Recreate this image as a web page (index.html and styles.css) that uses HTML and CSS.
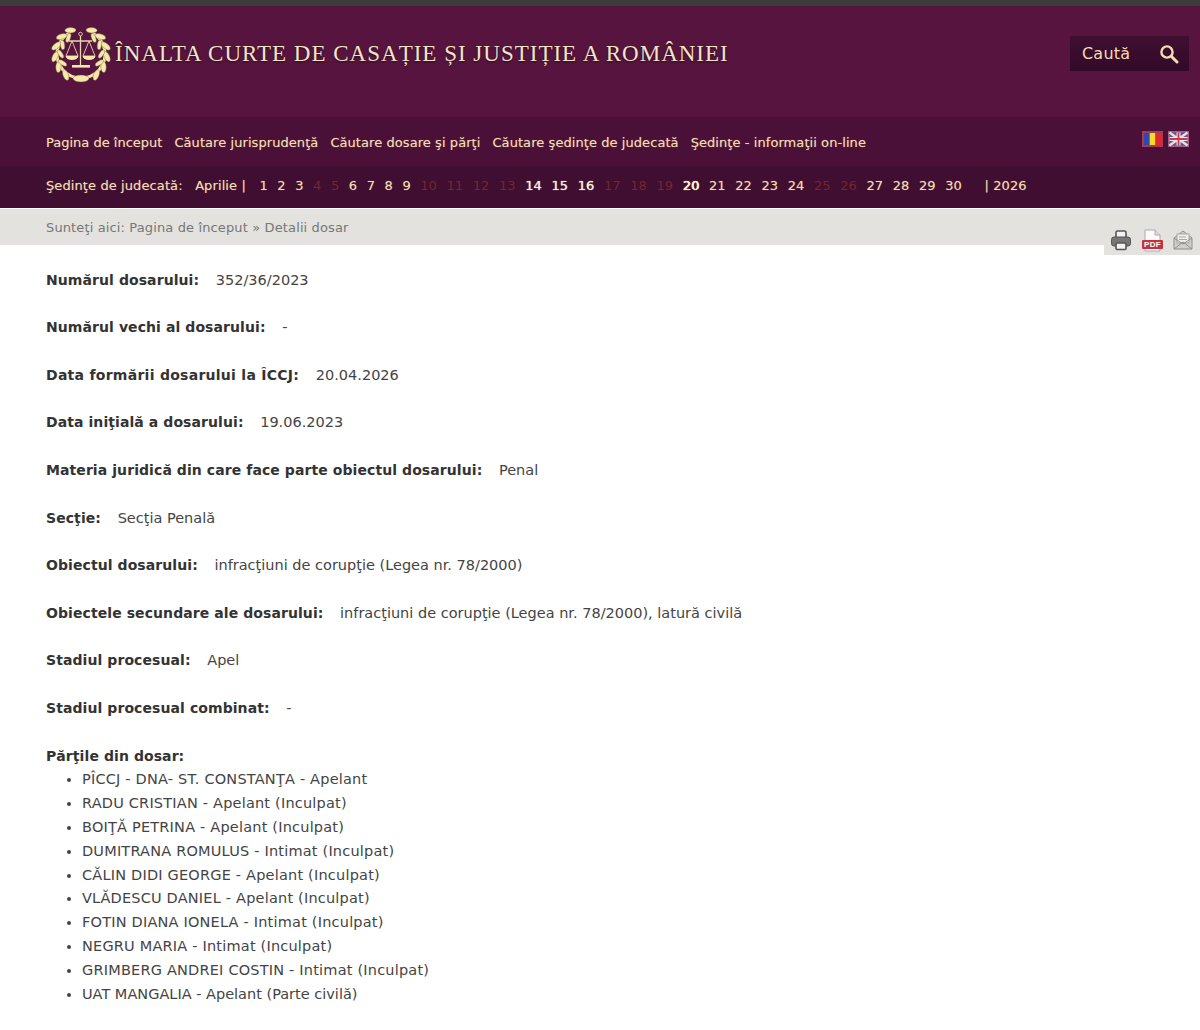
FILE: index.html
```html
<!DOCTYPE html>
<html lang="ro">
<head>
    <meta charset="UTF-8">
    <title>Detalii dosar</title>
    <link rel="stylesheet" href="styles.css">
</head>
<body>
    <header class="top">
        <div class="brand">
            <svg class="logo" viewBox="0 0 60 60" width="60" height="60">
                <!-- wreath -->
                <path d="M18 9.200A24 24 0 1 0 42 9.200" fill="none" stroke="#f3eaa8" stroke-width="3"/>
                <g fill="#f3eaa8" stroke="#7d5a4c" stroke-width="0.400">
                    <ellipse cx="30" cy="4" rx="2.700" ry="5.600" transform="rotate(24 30 30) rotate(68 30 4)"/>
                    <ellipse cx="30" cy="4" rx="2.700" ry="5.600" transform="rotate(-24 30 30) rotate(-68 30 4)"/>
                    <ellipse cx="30" cy="4" rx="2.700" ry="5.600" transform="rotate(48 30 30) rotate(58 30 4)"/>
                    <ellipse cx="30" cy="4" rx="2.700" ry="5.600" transform="rotate(-48 30 30) rotate(-58 30 4)"/>
                    <ellipse cx="30" cy="4" rx="2.700" ry="5.600" transform="rotate(72 30 30) rotate(58 30 4)"/>
                    <ellipse cx="30" cy="4" rx="2.700" ry="5.600" transform="rotate(-72 30 30) rotate(-58 30 4)"/>
                    <ellipse cx="30" cy="4" rx="2.700" ry="5.600" transform="rotate(96 30 30) rotate(58 30 4)"/>
                    <ellipse cx="30" cy="4" rx="2.700" ry="5.600" transform="rotate(-96 30 30) rotate(-58 30 4)"/>
                    <ellipse cx="30" cy="4" rx="2.700" ry="5.600" transform="rotate(120 30 30) rotate(58 30 4)"/>
                    <ellipse cx="30" cy="4" rx="2.700" ry="5.600" transform="rotate(-120 30 30) rotate(-58 30 4)"/>
                    <ellipse cx="30" cy="4" rx="2.700" ry="5.600" transform="rotate(144 30 30) rotate(58 30 4)"/>
                    <ellipse cx="30" cy="4" rx="2.700" ry="5.600" transform="rotate(-144 30 30) rotate(-58 30 4)"/>
                    <ellipse cx="30" cy="9.500" rx="2.100" ry="4.800" transform="rotate(38 30 30) rotate(-58 30 9.500)"/>
                    <ellipse cx="30" cy="9.500" rx="2.100" ry="4.800" transform="rotate(-38 30 30) rotate(58 30 9.500)"/>
                    <ellipse cx="30" cy="9.500" rx="2.100" ry="4.800" transform="rotate(64 30 30) rotate(-58 30 9.500)"/>
                    <ellipse cx="30" cy="9.500" rx="2.100" ry="4.800" transform="rotate(-64 30 30) rotate(58 30 9.500)"/>
                    <ellipse cx="30" cy="9.500" rx="2.100" ry="4.800" transform="rotate(90 30 30) rotate(-58 30 9.500)"/>
                    <ellipse cx="30" cy="9.500" rx="2.100" ry="4.800" transform="rotate(-90 30 30) rotate(58 30 9.500)"/>
                    <ellipse cx="30" cy="9.500" rx="2.100" ry="4.800" transform="rotate(116 30 30) rotate(-58 30 9.500)"/>
                    <ellipse cx="30" cy="9.500" rx="2.100" ry="4.800" transform="rotate(-116 30 30) rotate(58 30 9.500)"/>
                    <ellipse cx="30" cy="54.500" rx="8" ry="3.400"/>
                </g>
                <!-- scales -->
                <g fill="none" stroke="#e4d8ac" stroke-width="0.900">
                    <circle cx="29.500" cy="10" r="1.800"/>
                    <path d="M29.500 12V41M18 17H41" stroke-width="1.300"/>
                    <path d="M21 17L15 32H27ZM38 17L32 32H44Z"/>
                </g>
                <g fill="#f3eaa8">
                    <path d="M14.500 32H27.500C27 34.500 24.500 36 21 36S15 34.500 14.500 32ZM31.500 32H44.500C44 34.500 41.500 36 38 36S32 34.500 31.500 32Z"/>
                    <rect x="21" y="41" width="18" height="2.600"/>
                </g>
            </svg>
            <div class="site-title">ÎNALTA CURTE DE CASAȚIE ȘI JUSTIȚIE A ROMÂNIEI</div>
        </div>
        <div class="search">
            <span>Caută</span>
            <svg viewBox="0 0 20 20" width="20" height="20">
                <circle cx="8" cy="8" r="5.600" fill="none" stroke="#f5dcae" stroke-width="2.400"/>
                <path d="M12.500 12.500L18 18" stroke="#f5dcae" stroke-width="3" stroke-linecap="round"/>
            </svg>
        </div>
    </header>

    <nav class="menu">
        <a>Pagina de început</a>
        <a>Căutare jurisprudenţă</a>
        <a>Căutare dosare şi părţi</a>
        <a>Căutare şedinţe de judecată</a>
        <a>Şedinţe - informaţii on-line</a>
        <div class="flags">
            <svg viewBox="0 0 21 16" width="21" height="16">
                <rect width="21" height="16" fill="#a63a55"/>
                <rect x="2" y="2" width="5.700" height="12" fill="#2f47b0"/>
                <rect x="7.700" y="2" width="5.700" height="12" fill="#f2dc2a"/>
                <rect x="13.400" y="2" width="5.700" height="12" fill="#e4272f"/>
            </svg>
            <svg viewBox="0 0 21 16" width="21" height="16">
                <rect width="21" height="16" fill="#a3607c"/>
                <rect x="1.500" y="1.500" width="18" height="13" fill="#5a5a96"/>
                <path d="M1.500 1.500L19.500 14.500M19.500 1.500L1.500 14.500" stroke="#e6dfe6" stroke-width="2.200"/>
                <path d="M10.500 1.500V14.500M1.500 8H19.500" stroke="#eee4e8" stroke-width="4"/>
                <path d="M10.500 1.500V14.500M1.500 8H19.500" stroke="#c8394e" stroke-width="1.800"/>
            </svg>
        </div>
    </nav>

    <div class="dates">
        <span class="dates-label">Şedinţe de judecată:</span>
        <span class="month">Aprilie |</span>
        <a>1</a><a>2</a><a>3</a><a class="off">4</a><a class="off">5</a><a>6</a><a>7</a><a>8</a><a>9</a>
        <a class="off">10</a><a class="off">11</a><a class="off">12</a><a class="off">13</a>
        <a class="on">14</a><a class="on">15</a><a class="on">16</a>
        <a class="off">17</a><a class="off">18</a><a class="off">19</a>
        <a class="today">20</a><a>21</a><a>22</a><a>23</a><a>24</a>
        <a class="off">25</a><a class="off">26</a>
        <a>27</a><a>28</a><a>29</a><a>30</a>
        <span class="year">| 2026</span>
    </div>

    <div class="crumbs">Sunteţi aici: Pagina de început » Detalii dosar</div>

    <div class="tools">
        <svg viewBox="0 0 24 24" width="24" height="24">
            <path d="M7 9V4.500Q7 3 8.500 3H15.500Q17 3 17 4.500V9" fill="#f2f2f0" stroke="#555" stroke-width="1.600"/>
            <rect x="2.500" y="9" width="19" height="9" rx="2.500" fill="#777" stroke="#555"/>
            <rect x="7" y="15" width="10" height="6.500" rx="1" fill="#f2f2f0" stroke="#555" stroke-width="1.600"/>
        </svg>
        <svg viewBox="0 0 24 24" width="24" height="24">
            <path d="M5 2H15L20 7V23H5Z" fill="#fafafa" stroke="#aaa"/>
            <path d="M15 2V7H20" fill="#ddd" stroke="#aaa"/>
            <rect x="2" y="12" width="21" height="9" rx="1" fill="#c4333b"/>
            <text x="12.500" y="19.300" class="pdf-label">PDF</text>
        </svg>
        <svg viewBox="0 0 24 24" width="24" height="24">
            <path d="M3 10L12 3L21 10V21H3Z" fill="#cfcfcb" stroke="#8f8f8b"/>
            <rect x="6" y="6" width="12" height="9" fill="#eee" stroke="#a5a5a1"/>
            <path d="M8 9H15M8 11.500H16" stroke="#aaa"/>
            <path d="M3 21L12 14L21 21M3 10L12 16L21 10" fill="none" stroke="#8f8f8b"/>
        </svg>
    </div>

    <main class="details">
        <p><b>Numărul dosarului:</b> 352/36/2023</p>
        <p><b>Numărul vechi al dosarului:</b> -</p>
        <p><b class="wide">Data formării dosarului la ÎCCJ:</b> 20.04.2026</p>
        <p><b>Data iniţială a dosarului:</b> 19.06.2023</p>
        <p><b>Materia juridică din care face parte obiectul dosarului:</b> Penal</p>
        <p><b>Secţie:</b> Secţia Penală</p>
        <p><b>Obiectul dosarului:</b> infracţiuni de corupţie (Legea nr. 78/2000)</p>
        <p><b>Obiectele secundare ale dosarului:</b> infracţiuni de corupţie (Legea nr. 78/2000), latură civilă</p>
        <p><b>Stadiul procesual:</b> Apel</p>
        <p><b>Stadiul procesual combinat:</b> -</p>
        <b>Părţile din dosar:</b>
        <ul>
            <li>PÎCCJ - DNA- ST. CONSTANŢA - Apelant</li>
            <li>RADU CRISTIAN - Apelant (Inculpat)</li>
            <li>BOIŢĂ PETRINA - Apelant (Inculpat)</li>
            <li>DUMITRANA ROMULUS - Intimat (Inculpat)</li>
            <li>CĂLIN DIDI GEORGE - Apelant (Inculpat)</li>
            <li>VLĂDESCU DANIEL - Apelant (Inculpat)</li>
            <li>FOTIN DIANA IONELA - Intimat (Inculpat)</li>
            <li>NEGRU MARIA - Intimat (Inculpat)</li>
            <li>GRIMBERG ANDREI COSTIN - Intimat (Inculpat)</li>
            <li class="tight">UAT MANGALIA - Apelant (Parte civilă)</li>
        </ul>
    </main>
</body>
</html>
```

FILE: styles.css
```css
body {
    font-family: "DejaVu Sans", sans-serif;
    font-size: 13px;
    color: #444;
    background-color: #fff;
    margin: 0;
    padding: 0;
    position: relative;
}

.top {
    display: flex;
    justify-content: space-between;
    height: 111px;
    border-top: 6px solid #3c3c3c;
    background-color: #57143f;
    padding: 0 11px 0 51px;
}

.brand {
    display: flex;
    align-items: flex-start;
    padding-top: 18px;
}

.logo {
    flex: none;
}

.site-title {
    font-family: "Liberation Serif", serif;
    font-size: 23px;
    letter-spacing: 1px;
    color: #f2e4c6;
    text-shadow: 0 1px 2px #2a0a20;
    margin: 17px 0 0 4px;
    white-space: nowrap;
}

.search {
    display: flex;
    align-items: center;
    justify-content: space-between;
    width: 119px;
    height: 35px;
    box-sizing: border-box;
    margin-top: 30px;
    padding: 0 10px 0 12px;
    background: linear-gradient(#3f0f30, #32092a);
    color: #f5dcae;
    font-size: 16px;
    letter-spacing: 0.2px;
}

.menu {
    display: flex;
    align-items: center;
    gap: 12px;
    height: 49px;
    box-sizing: border-box;
    padding: 2px 11px 0 46px;
    background-color: #4a1038;
    color: #f5dcae;
    letter-spacing: 0.07px;
    text-shadow: 0 0 1px rgba(245, 220, 174, 0.45);
    white-space: nowrap;
}

.menu a:first-child {
    letter-spacing: 0;
}

.flags {
    display: flex;
    gap: 5px;
    align-self: flex-start;
    margin: 12px 0 0 auto;
}

.dates {
    display: flex;
    align-items: center;
    gap: 9.500px;
    height: 42px;
    padding-left: 46px;
    background-color: #3f0e30;
    color: #f5dcae;
    letter-spacing: 0.1px;
    line-height: 38px;
    text-shadow: 0 0 1px rgba(245, 220, 174, 0.45);
    white-space: nowrap;
    border-bottom: 1px solid #fff;
}

.dates a, .dates span {
    margin-bottom: 3px;
}

.dates-label {
    margin-right: 3px;
}

.month {
    margin-right: 4px;
}

.dates .off {
    color: #75262f;
    text-shadow: none;
}

.dates .on {
    color: #fbeeda;
    text-shadow: 0 0 1px #fbeeda;
}

.dates .today {
    color: #fff2d8;
    text-shadow: 0 0 1px #fff2d8, 0.4px 0 0 #fff2d8;
}

.year {
    margin-left: 13px;
}

.crumbs {
    height: 36px;
    line-height: 37px;
    padding-left: 46px;
    background-color: #e3e2de;
    color: #777;
    letter-spacing: 0.13px;
}

.tools {
    position: absolute;
    top: 225px;
    right: 0;
    display: flex;
    gap: 7px;
    padding: 3px 5px;
    background-color: #e3e2de;
}

.pdf-label {
    font-family: "Liberation Sans", sans-serif;
    font-size: 8px;
    font-weight: bold;
    letter-spacing: 0.4px;
    fill: #fff;
    text-anchor: middle;
}

.details {
    padding: 23.600px 46px 0;
    font-size: 14.500px;
    line-height: 23.800px;
}

.details p {
    margin: 0 0 23.800px;
}

.details p b {
    margin-right: 12px;
}

.details b {
    font-size: 14px;
    letter-spacing: 0.08px;
    color: #333;
}

.details b.wide {
    letter-spacing: 0.27px;
}

.details ul {
    margin: 0;
    padding-left: 36px;
    letter-spacing: 0.2px;
}

.details li.tight {
    letter-spacing: 0;
}
```
